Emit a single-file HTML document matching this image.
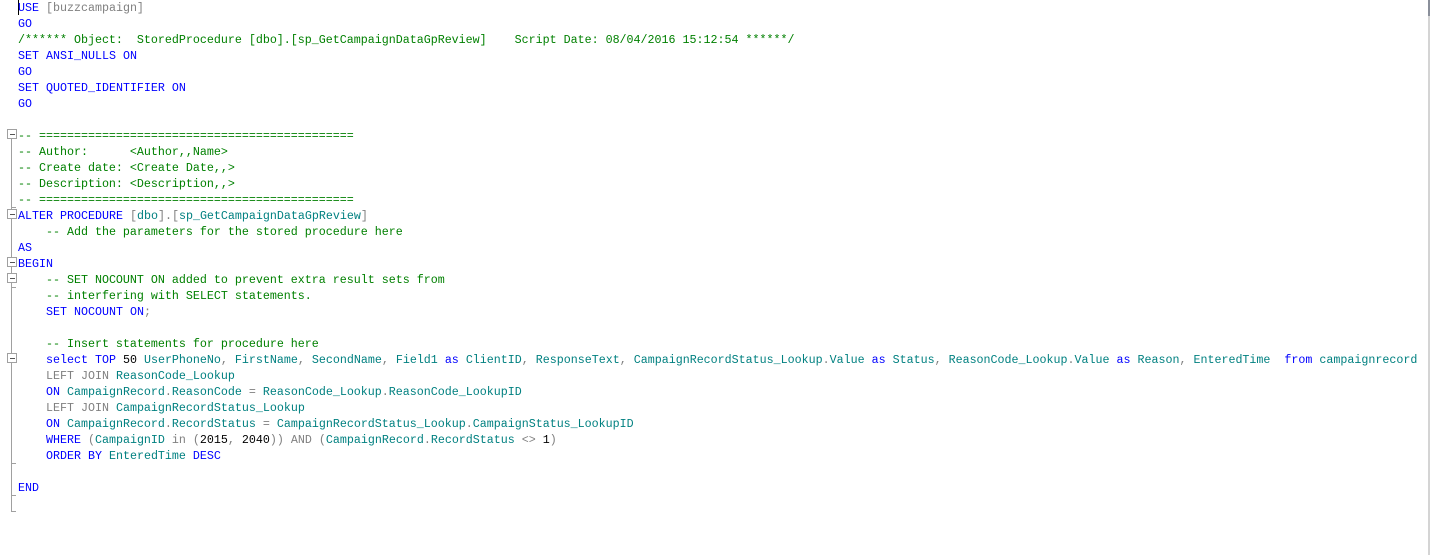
<!DOCTYPE html>
<html><head><style>
body{margin:0;width:1430px;height:555px;background:#fff;overflow:hidden;position:relative}
pre{position:absolute;left:18px;top:0;margin:0;font-family:"Liberation Mono",monospace;font-size:11.67px;line-height:16px;color:#000}
.k{color:#0000ff}.t{color:#008080}.c{color:#008000}.g{color:#808080}.m{color:#ff00ff}
.box{position:absolute;left:7px;width:8px;height:8px;border:1px solid #a0a0a0;background:#fff}
.box:after{content:"";position:absolute;left:2px;top:4px;width:5px;height:1px;background:#555}
.vl{position:absolute;left:11px;width:1px;background:#a0a0a0}
.tk{position:absolute;left:11px;width:5px;height:1px;background:#a0a0a0}
</style></head><body>
<div class="vl" style="top:135px;height:377px"></div>
<div class="tk" style="top:207px"></div><div class="tk" style="top:287px"></div><div class="tk" style="top:463px"></div><div class="tk" style="top:495px"></div><div class="tk" style="top:511px"></div>
<div class="box" style="top:129px"></div><div class="box" style="top:209px"></div><div class="box" style="top:257px"></div><div class="box" style="top:273px"></div><div class="box" style="top:353px"></div>
<div style="position:absolute;left:18px;top:0;width:1px;height:15px;background:#000"></div>
<div style="position:absolute;left:1428px;top:0;width:2px;height:555px;background:#d4d4d4"></div>
<div style="position:absolute;left:1428px;top:0;width:2px;height:16px;background:#8a8f9a"></div>
<pre><span class="k">USE</span> <span class="g">[buzzcampaign]</span>
<span class="k">GO</span>
<span class="c">/****** Object:  StoredProcedure [dbo].[sp_GetCampaignDataGpReview]    Script Date: 08/04/2016 15:12:54 ******/</span>
<span class="k">SET</span> <span class="k">ANSI_NULLS</span> <span class="k">ON</span>
<span class="k">GO</span>
<span class="k">SET</span> <span class="k">QUOTED_IDENTIFIER</span> <span class="k">ON</span>
<span class="k">GO</span>

<span class="c">-- =============================================
-- Author:      &lt;Author,,Name&gt;
-- Create date: &lt;Create Date,,&gt;
-- Description: &lt;Description,,&gt;
-- =============================================</span>
<span class="k">ALTER</span> <span class="k">PROCEDURE</span> <span class="g">[</span><span class="t">dbo</span><span class="g">].[</span><span class="t">sp_GetCampaignDataGpReview</span><span class="g">]</span>
    <span class="c">-- Add the parameters for the stored procedure here</span>
<span class="k">AS</span>
<span class="k">BEGIN</span>
    <span class="c">-- SET NOCOUNT ON added to prevent extra result sets from
    -- interfering with SELECT statements.</span>
    <span class="k">SET</span> <span class="k">NOCOUNT</span> <span class="k">ON</span><span class="g">;</span>

    <span class="c">-- Insert statements for procedure here</span>
    <span class="k">select</span> <span class="k">TOP</span> 50 <span class="t">UserPhoneNo</span><span class="g">,</span> <span class="t">FirstName</span><span class="g">,</span> <span class="t">SecondName</span><span class="g">,</span> <span class="t">Field1</span> <span class="k">as</span> <span class="t">ClientID</span><span class="g">,</span> <span class="t">ResponseText</span><span class="g">,</span> <span class="t">CampaignRecordStatus_Lookup</span><span class="g">.</span><span class="t">Value</span> <span class="k">as</span> <span class="t">Status</span><span class="g">,</span> <span class="t">ReasonCode_Lookup</span><span class="g">.</span><span class="t">Value</span> <span class="k">as</span> <span class="t">Reason</span><span class="g">,</span> <span class="t">EnteredTime</span>  <span class="k">from</span> <span class="t">campaignrecord</span>
    <span class="g">LEFT JOIN</span> <span class="t">ReasonCode_Lookup</span>
    <span class="k">ON</span> <span class="t">CampaignRecord</span><span class="g">.</span><span class="t">ReasonCode</span> <span class="g">=</span> <span class="t">ReasonCode_Lookup</span><span class="g">.</span><span class="t">ReasonCode_LookupID</span>
    <span class="g">LEFT JOIN</span> <span class="t">CampaignRecordStatus_Lookup</span>
    <span class="k">ON</span> <span class="t">CampaignRecord</span><span class="g">.</span><span class="t">RecordStatus</span> <span class="g">=</span> <span class="t">CampaignRecordStatus_Lookup</span><span class="g">.</span><span class="t">CampaignStatus_LookupID</span>
    <span class="k">WHERE</span> <span class="g">(</span><span class="t">CampaignID</span> <span class="g">in</span> <span class="g">(</span>2015<span class="g">,</span> 2040<span class="g">))</span> <span class="g">AND</span> <span class="g">(</span><span class="t">CampaignRecord</span><span class="g">.</span><span class="t">RecordStatus</span> <span class="g">&lt;&gt;</span> 1<span class="g">)</span>
    <span class="k">ORDER</span> <span class="k">BY</span> <span class="t">EnteredTime</span> <span class="k">DESC</span>

<span class="k">END</span>
</pre>
</body></html>
